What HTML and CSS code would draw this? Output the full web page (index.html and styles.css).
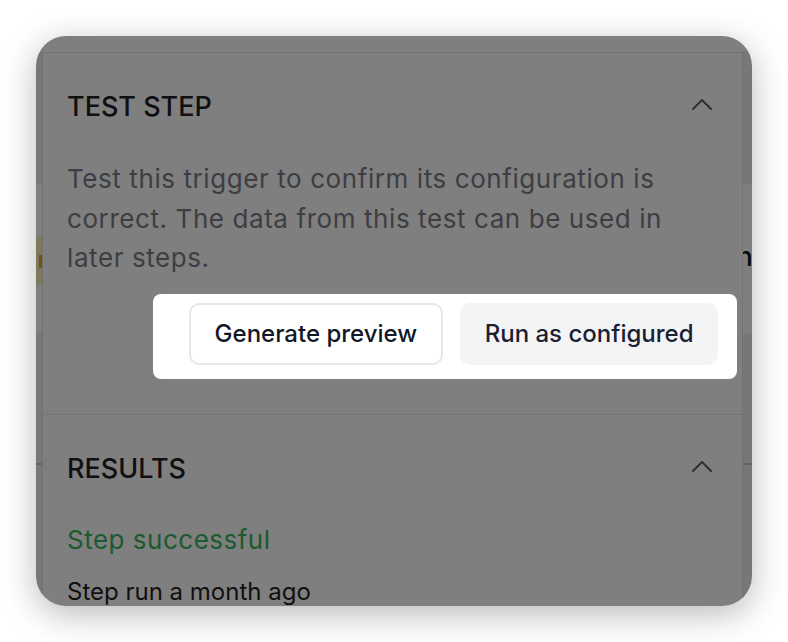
FILE: index.html
```html
<!DOCTYPE html>
<html lang="en">
<head>
<meta charset="utf-8">
<title>Test step</title>
<link rel="stylesheet" href="styles.css">
</head>
<body>
<div class="card">
  <div class="topbar"></div>
  <div class="body">
    <div class="strip">
      <div class="strip-gray strip-top"></div>
      <div class="strip-white strip-node"><span class="badge"><span class="badge-dot"></span></span></div>
      <div class="strip-gray strip-rest"><div class="edge-line"></div></div>
    </div>
    <aside class="panel">
      <section class="section section-test">
        <div class="sec-head">
          <h2 class="sec-title">TEST STEP</h2>
          <svg class="chev" width="20" height="12" viewBox="0 0 20 12" aria-hidden="true"><polyline points="1,11 10,2 19,11" fill="none" stroke="currentColor" stroke-width="2" stroke-linecap="round" stroke-linejoin="round"/></svg>
        </div>
        <p class="desc">Test this trigger to confirm its configuration is<br>correct. The data from this test can be used in<br>later steps.</p>
        <div class="actions">
          <div class="spotlight">
            <button class="btn btn-outline">Generate preview</button>
            <button class="btn btn-soft">Run as configured</button>
          </div>
        </div>
      </section>
      <section class="section section-results">
        <div class="sec-head">
          <h2 class="sec-title">RESULTS</h2>
          <svg class="chev" width="20" height="12" viewBox="0 0 20 12" aria-hidden="true"><polyline points="1,11 10,2 19,11" fill="none" stroke="currentColor" stroke-width="2" stroke-linecap="round" stroke-linejoin="round"/></svg>
        </div>
        <p class="status">Step successful</p>
        <p class="meta">Step run a month ago</p>
      </section>
    </aside>
    <div class="strip strip-right">
      <div class="strip-gray strip-top"></div>
      <div class="strip-white strip-node"><span class="peek">n</span></div>
      <div class="strip-gray strip-rest"><div class="edge-line"></div></div>
    </div>
  </div>
  <div class="overlay"></div>
</div>
</body>
</html>
```
FILE: styles.css
```css
* { box-sizing: border-box; }
html, body { margin: 0; padding: 0; background: #ffffff; }
body {
  font-family: Inter, "Noto Sans", "Liberation Sans", sans-serif;
  color: #1f2024;
  padding: 36px;
}
.card {
  position: relative;
  width: 716px;
  height: 570px;
  border-radius: 30px;
  overflow: hidden;
  background: #ffffff;
  box-shadow: 0 8px 34px rgba(0, 0, 0, 0.28);
  display: flex;
  flex-direction: column;
}
.topbar {
  height: 17px;
  flex: none;
  background: #ffffff;
  border-bottom: 1px solid #e6e6e6;
}
.body {
  flex: 1;
  display: grid;
  grid-template-columns: 6px 701px 9px;
  min-height: 0;
}
.strip {
  display: flex;
  flex-direction: column;
  overflow: hidden;
}
.strip-gray { background: #eeeeee; }
.strip-white { background: #ffffff; }
.strip-top { height: 131px; flex: none; }
.strip-node {
  height: 149px;
  flex: none;
  padding-top: 53px;
}
.strip-rest {
  flex: 1;
  padding-top: 130px;
}
.edge-line {
  height: 2px;
  background: #c9c9c9;
}
.badge {
  display: flex;
  align-items: center;
  justify-content: flex-end;
  width: 6px;
  height: 48px;
  background: #fdf3b8;
}
.badge-dot {
  display: block;
  width: 3px;
  height: 13px;
  background: #e8a21c;
}
.strip-right .strip-node { padding-top: 58px; }
.peek {
  display: block;
  font-size: 26px;
  line-height: 30px;
  font-weight: 500;
  color: #111111;
  margin-left: -6px;
}
.panel {
  background: #ffffff;
  border-left: 1px solid #e5e7eb;
  border-right: 1px solid #e5e7eb;
  display: flex;
  flex-direction: column;
  min-height: 0;
}
.section {
  padding: 36px 24px 0 24px;
}
.section-test { padding-bottom: 49px; }
.section-results { border-top: 1px solid #e5e7eb; }
.sec-head {
  display: flex;
  align-items: center;
  justify-content: space-between;
  height: 36px;
}
.sec-title {
  margin: 0;
  font-size: 27px;
  line-height: 36px;
  font-weight: 500;
  color: #1f2024;
}
.chev {
  color: #5c6070;
  margin-right: 6px;
  margin-bottom: 6px;
}
.desc {
  margin: 34px 0 0 0;
  font-size: 26px;
  line-height: 39.5px;
  letter-spacing: 0.58px;
  color: #7a7c86;
}
.actions {
  display: flex;
  justify-content: flex-end;
  margin-top: 25px;
}
.spotlight {
  position: relative;
  z-index: 2;
  display: flex;
  gap: 17px;
  background: #ffffff;
  border-radius: 8px;
  padding: 9px 19px 14px 36px;
  margin: -9px -19px -14px 0;
}
.btn {
  height: 62px;
  font-family: Inter, "Noto Sans", "Liberation Sans", sans-serif;
  font-size: 24px;
  font-weight: 500;
  color: #111827;
  border-radius: 10px;
  padding: 0 24px;
  cursor: pointer;
}
.btn-outline {
  background: #ffffff;
  border: 2px solid #e5e7eb;
}
.btn-soft {
  background: #f3f4f6;
  border: 2px solid #f3f4f6;
  color: #1c2033;
  padding: 0 22.5px;
}
.status {
  margin: 33px 0 0 0;
  font-size: 26px;
  line-height: 40px;
  letter-spacing: 0.5px;
  color: #38b460;
}
.meta {
  margin: 14px 0 0 0;
  font-size: 24px;
  line-height: 36px;
  color: #1f1f1f;
}
.overlay {
  position: absolute;
  inset: 0;
  z-index: 1;
  background: rgba(0, 0, 0, 0.5);
  pointer-events: none;
}
```
